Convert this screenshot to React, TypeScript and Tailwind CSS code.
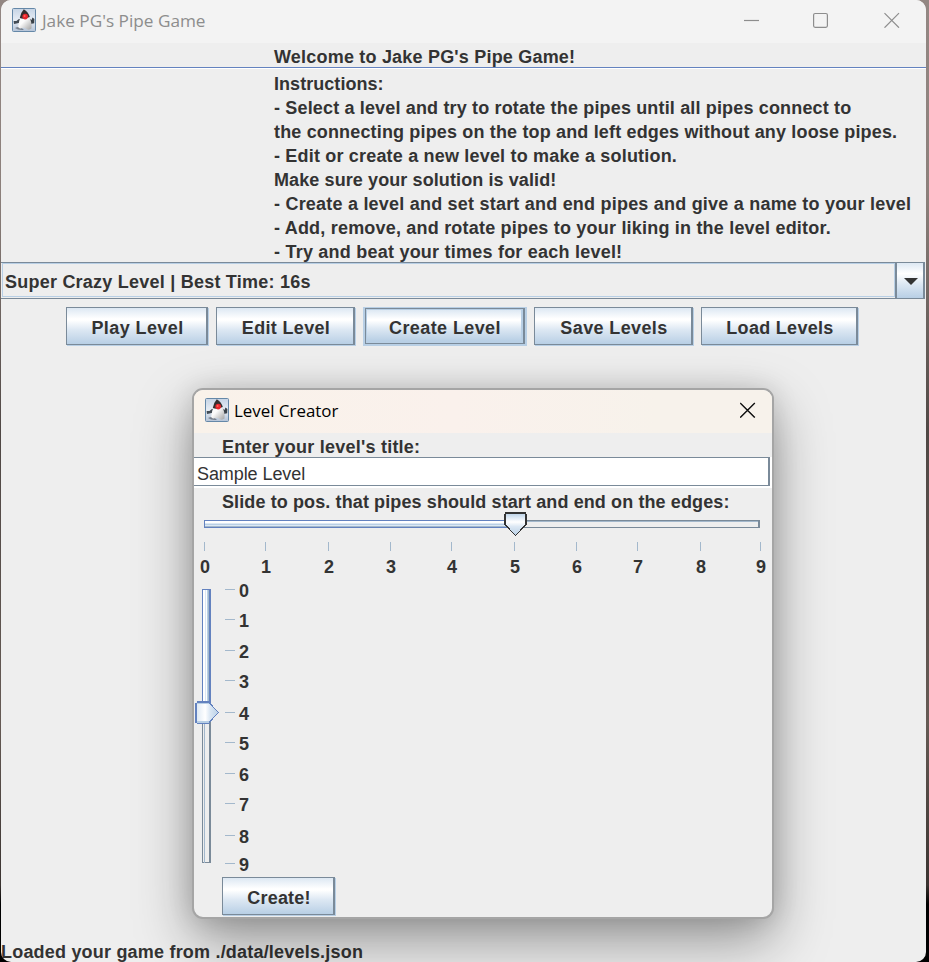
import React from "react";

const sans = "font-['Liberation_Sans',Arial,sans-serif]";
const ui = "font-['Open_Sans','Noto_Sans',sans-serif]";

function DukeIcon() {
  return (
    <svg width="24" height="24" viewBox="0 0 24 24" className="shrink-0">
      <defs>
        <linearGradient id="duke-bg" x1="0" y1="0" x2="0" y2="1">
          <stop offset="0" stopColor="#c6d4e5" />
          <stop offset=".5" stopColor="#e6ecf4" />
          <stop offset="1" stopColor="#b4c3d7" />
        </linearGradient>
        <linearGradient id="duke-body" x1="0" y1="0" x2="1" y2="1">
          <stop offset=".4" stopColor="#fbfbfb" />
          <stop offset="1" stopColor="#a2a2a2" />
        </linearGradient>
      </defs>
      <rect x=".5" y=".5" width="23" height="23" rx="1" fill="url(#duke-bg)" stroke="#6588a8" />
      <path d="M3 20 Q6 18.5 9 19.5 L12 22 Q6 22.5 3 20Z" fill="#5d6670" opacity=".75" />
      <path d="M9.5 10.5 Q6 10.5 4.5 13 L1.6 13 L2 16 L4.5 15.5 L8.5 14.5Z" fill="#434c55" />
      <path d="M16.5 9.5 L19.5 12 L20.5 9.5 L22.4 11 L22.2 15.2 L18.5 16Z" fill="#3a4148" />
      <path d="M9 8 Q6.6 13 6.2 19 Q7 21 9.5 20.2 Q12 19 14.5 21 Q17 22.5 19.5 20.5 Q20.2 14 16.8 8Z" fill="url(#duke-body)" />
      <path d="M11.8 1.2 Q8.6 4.6 7.8 10 Q11.5 12 17.8 9 Q16.4 4 11.8 1.2Z" fill="#342f2e" />
      <circle cx="13.2" cy="8.6" r="2.8" fill="#e8262b" />
      <circle cx="12.6" cy="7.9" r="1" fill="#ff5f58" />
    </svg>
  );
}

function MetalButton({ label, width, spacing, focused = false }: { label: string; width: string; spacing: string; focused?: boolean }) {
  const face = "bg-[linear-gradient(180deg,#dde8f3_0%,#ffffff_30%,#ffffff_34%,#dde8f3_60%,#b8cfe5_100%)]";
  const text = `text-[18px] leading-[20px] font-bold text-[#333333] whitespace-nowrap ${spacing}`;
  if (focused) {
    return (
      <div className={`${width} h-[39px] bg-[#b8cfe5] pt-px pb-[2px] pl-[2px] pr-[2px]`}>
        <div className="h-full border border-r-2 border-[#7a8a99]">
          <div className={`h-full border border-r-2 border-b-2 border-[#b8cfe5] flex items-center justify-center pt-[5px] pl-[2px] ${face}`}>
            <span className={text}>{label}</span>
          </div>
        </div>
      </div>
    );
  }
  return (
    <div className={`${width} h-[38px] border border-r-2 border-[#7a8a99] shadow-[1px_1px_0_#b8cfe5] flex items-center justify-center pt-[3px] pl-[2px] ${face}`}>
      <span className={text}>{label}</span>
    </div>
  );
}

const instructions: [string, string][] = [
  ["Instructions:", "tracking-[0.05px]"],
  ["- Select a level and try to rotate the pipes until all pipes connect to", "tracking-[0.158px]"],
  ["the connecting pipes on the top and left edges without any loose pipes.", "tracking-[0.158px]"],
  ["- Edit or create a new level to make a solution.", "tracking-[0.185px]"],
  ["Make sure your solution is valid!", "tracking-[0.1px]"],
  ["- Create a level and set start and end pipes and give a name to your level", "tracking-[0.215px]"],
  ["- Add, remove, and rotate pipes to your liking in the level editor.", "tracking-[0.2px]"],
  ["- Try and beat your times for each level!", "tracking-[0.225px]"],
];

const numbers = [0, 1, 2, 3, 4, 5, 6, 7, 8, 9];

function HorizontalTrack() {
  return (
    <svg width="578" height="26" viewBox="194 511 578 26" shapeRendering="crispEdges" className="block">
      <defs>
        <linearGradient id="thumb-h" x1="0" y1="0" x2="0" y2="1">
          <stop offset="0" stopColor="#b8cfe5" />
          <stop offset=".2" stopColor="#dce8f4" />
          <stop offset=".4" stopColor="#ffffff" />
          <stop offset=".6" stopColor="#dce8f4" />
          <stop offset="1" stopColor="#b8cfe5" />
        </linearGradient>
      </defs>
      <rect x="204" y="520" width="556" height="8" fill="#7a8a99" />
      <rect x="205" y="522" width="553" height="5" fill="#eeeeee" />
      <rect x="205" y="521" width="553" height="1" fill="#a3b8cc" />
      <rect x="204" y="520" width="304" height="8" fill="#6382bf" />
      <rect x="205" y="521" width="303" height="2" fill="#ffffff" />
      <rect x="205" y="523" width="303" height="1" fill="#dce8f4" />
      <rect x="205" y="524" width="303" height="1" fill="#b8cfe5" />
      <rect x="205" y="525" width="303" height="1" fill="#dce8f4" />
      <rect x="205" y="526" width="303" height="1" fill="#a3b8cc" />
      <path d="M505 513H526V525L515.5 535.5L505 525Z" fill="url(#thumb-h)" />
      <path d="M505 512H526V514H505ZM504 514H506V525H504ZM525 514H527V525H525Z" fill="#333333" />
      <path d="M505.5 525L515.5 535.5L525.5 525" fill="none" stroke="#333333" />
    </svg>
  );
}

function VerticalTrack() {
  return (
    <svg width="26" height="276" viewBox="194 588 26 276" shapeRendering="crispEdges" className="block shrink-0">
      <defs>
        <linearGradient id="thumb-v" x1="0" y1="0" x2="1" y2="0">
          <stop offset="0" stopColor="#dce8f4" />
          <stop offset=".4" stopColor="#ffffff" />
          <stop offset=".6" stopColor="#dce8f4" />
          <stop offset="1" stopColor="#b8cfe5" />
        </linearGradient>
      </defs>
      <rect x="202" y="589" width="9" height="274" fill="#7a8a99" />
      <rect x="203" y="590" width="6" height="272" fill="#eeeeee" />
      <rect x="204" y="590" width="1" height="273" fill="#a3b8cc" />
      <rect x="202" y="589" width="9" height="114" fill="#6382bf" />
      <rect x="203" y="590" width="6" height="112" fill="#ffffff" />
      <rect x="205" y="590" width="1" height="112" fill="#dce8f4" />
      <rect x="207" y="590" width="1" height="112" fill="#b8cfe5" />
      <rect x="208" y="590" width="1" height="112" fill="#a3b8cc" />
      <path d="M196 702H209L219 712.5L209 723H196Z" fill="url(#thumb-v)" />
      <path d="M197 701H209V703H197ZM195 703H197V723H195ZM197 723H209V724H197Z" fill="#6382bf" />
      <rect x="197" y="703" width="12" height="1" fill="#b8cfe5" />
      <rect x="197" y="721" width="12" height="2" fill="#b8cfe5" />
      <path d="M209 702.5L218.5 712.5L209 722.5" fill="none" stroke="#6382bf" />
    </svg>
  );
}

function LevelCreator() {
  return (
    <div className="absolute left-[191px] top-[388px] w-[582px] h-[531px] rounded-[11px] border-2 border-[#a5a5a5] bg-[#eeeeee] overflow-hidden flex flex-col shadow-[0_22px_56px_rgba(0,0,0,0.38),0_0_26px_rgba(0,0,0,0.12)]">
      <div className="h-[43px] pl-[11px] pr-4 pb-[3px] shrink-0 bg-[linear-gradient(90deg,#f9f2ea_0%,#faf1ec_45%,#f7f2eb_80%)] flex items-center">
        <DukeIcon />
        <span className={`${ui} ml-[5px] pt-px text-[16.9px] text-black grow whitespace-nowrap`}>Level Creator</span>
        <svg width="16" height="16" viewBox="0 0 16 16" stroke="#111111" strokeWidth="1.4">
          <path d="M.2 1L14.8 15.6M14.8 1L.2 15.6" />
        </svg>
      </div>
      <div className="h-[24px] shrink-0 pl-[28px] pt-[2px] text-[18px] leading-[24px] font-bold whitespace-nowrap tracking-[0.24px]">Enter your level's title:</div>
      <div className="h-[31px] shrink-0 bg-white pr-[2px] pb-[2px]">
        <div className="h-[29px] border-y border-r-2 border-[#7a8a99] pl-[3px] pt-[3px] text-[18px] leading-[26px] whitespace-nowrap tracking-[-0.08px]">Sample Level</div>
      </div>
      <div className="h-[23px] shrink-0 pl-[28px] pt-[2px] text-[18px] leading-[24px] font-bold whitespace-nowrap tracking-[0.11px]">Slide to pos. that pipes should start and end on the edges:</div>
      <div className="h-[26px] shrink-0">
        <HorizontalTrack />
      </div>
      <div className="h-[51px] shrink-0 pt-[5px] grid grid-cols-[61px_63px_62px_61px_63px_62px_61px_63px_60px_20px] text-[18px] leading-[20px] font-bold">
        {numbers.map((n) => (
          <div key={n} className="w-[21px] flex flex-col items-center">
            <i className="block w-px h-[9px] bg-[#a3b8cc]" />
            <span className="mt-[6px] pl-px">{n}</span>
          </div>
        ))}
      </div>
      <div className="h-[289px] shrink-0 flex">
        <VerticalTrack />
        <div className="ml-[5px] -mt-[9px] grid grid-rows-[30px_31px_30px_32px_30px_31px_30px_32px_28px_20px] text-[18px] leading-[20px] font-bold">
          {numbers.map((n) => (
            <div key={n} className="h-[20px] flex items-start">
              <i className="block mt-[10px] w-[10px] h-px bg-[#a3b8cc]" />
              <span className="ml-1 mt-[2px]">{n}</span>
            </div>
          ))}
        </div>
      </div>
      <div className="h-[38px] shrink-0 pl-[28px]">
        <MetalButton label="Create!" width="w-[113px]" spacing="tracking-[0.2px]" />
      </div>
    </div>
  );
}

export default function App() {
  return (
    <div className={`${sans} w-[929px] h-[962px] overflow-hidden px-px pr-[3px] text-[#333333] bg-[linear-gradient(180deg,#938783_0%,#8c807b_20%,#4f4744_45%,#655a54_75%,#3a3330_92%,#000000_94%)]`}>
      <div className="relative h-full rounded-[10px] bg-[#eeeeee] overflow-hidden flex flex-col">
        <div className="h-[43px] shrink-0 bg-[#f3f3f3] flex items-center pl-[11px] pr-[26px] pb-[3px]">
          <DukeIcon />
          <span className={`${ui} ml-[6px] pt-[2px] grow text-[17.2px] text-[#8d8d8d] whitespace-nowrap`}>Jake PG's Pipe Game</span>
          <svg width="156" height="16" viewBox="0 0 156 16" fill="none" stroke="#8d8d8d" strokeWidth="1.2">
            <path d="M0 8.5H15" />
            <rect x="69.6" y="1.5" width="13.8" height="13.8" rx="1.5" />
            <path d="M140.5 1.2L155 15.7M155 1.2L140.5 15.7" />
          </svg>
        </div>
        <div className="h-[26px] shrink-0 border-b border-white">
          <div className="h-[25px] border-b border-[#6382bf] pl-[273px] pt-[2px] text-[18px] leading-[24px] font-bold whitespace-nowrap tracking-[0.2px]">Welcome to Jake PG's Pipe Game!</div>
        </div>
        <div className="h-[193px] shrink-0 pt-[3px] pl-[273px] text-[18px] leading-[24px] font-bold whitespace-nowrap">
          {instructions.map(([line, spacing]) => (
            <p key={line} className={spacing}>{line}</p>
          ))}
        </div>
        <div className="h-[37px] w-[924px] shrink-0 border-y border-r-2 border-[#7a8a99] flex">
          <div className="grow mb-px ml-px border border-[#b8cfe5] pl-[2px] pt-[2px] text-[18px] leading-[32px] font-bold whitespace-nowrap tracking-[0.23px]">Super Crazy Level | Best Time: 16s</div>
          <div className="w-[28px] border-l-2 border-[#7a8a99] flex items-center justify-center pl-[2px] pt-px bg-[linear-gradient(180deg,#dde8f3_0%,#ffffff_30%,#dde8f3_60%,#b8cfe5_100%)]">
            <svg width="14" height="7" viewBox="0 0 14 7" fill="#333333">
              <path d="M0 0H14L7 7Z" />
            </svg>
          </div>
        </div>
        <div className="pt-2 pl-[65px] flex">
          <MetalButton label="Play Level" width="w-[142px]" spacing="tracking-[0.4px]" />
          <div className="w-2" />
          <MetalButton label="Edit Level" width="w-[139px]" spacing="tracking-[0.33px]" />
          <div className="w-2" />
          <MetalButton label="Create Level" width="w-[164px]" spacing="tracking-[0.4px]" focused />
          <div className="w-[7px]" />
          <MetalButton label="Save Levels" width="w-[159px]" spacing="tracking-[0.38px]" />
          <div className="w-2" />
          <MetalButton label="Load Levels" width="w-[157px]" spacing="tracking-[0.3px]" />
        </div>
        <div className="mt-auto h-[22px] text-[18px] leading-[24px] font-bold whitespace-nowrap tracking-[0.2px]">Loaded your game from ./data/levels.json</div>
        <LevelCreator />
      </div>
    </div>
  );
}
